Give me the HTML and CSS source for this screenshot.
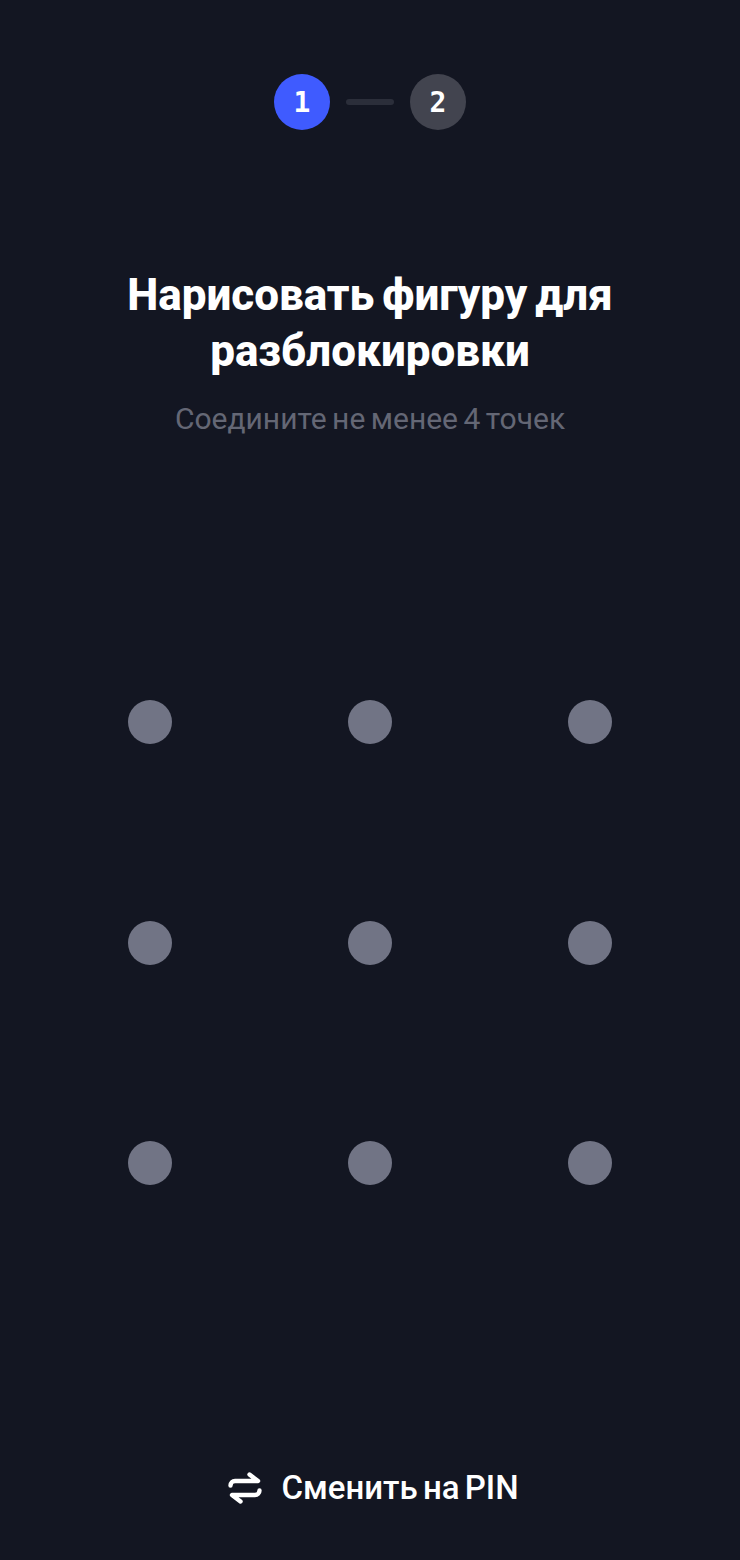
FILE: index.html
```html
<!DOCTYPE html>
<html lang="ru">
<head>
<meta charset="utf-8">
<title>Нарисовать фигуру для разблокировки</title>
<link rel="stylesheet" href="styles.css">
</head>
<body>
<main class="screen">
  <div class="steps">
    <div class="step step-active">1</div>
    <div class="step-line"></div>
    <div class="step step-next">2</div>
  </div>
  <h1 class="title">Нарисовать фигуру для разблокировки</h1>
  <p class="hint">Соедините не менее 4 точек</p>
  <div class="pattern">
    <span class="dot"></span><span class="dot"></span><span class="dot"></span>
    <span class="dot"></span><span class="dot"></span><span class="dot"></span>
    <span class="dot"></span><span class="dot"></span><span class="dot"></span>
  </div>
  <button class="switch" type="button">
    <svg class="switch-icon" width="36" height="36" viewBox="0 0 36 36" fill="none" stroke="#fff" stroke-width="4.4" stroke-linecap="round" stroke-linejoin="round">
      <path d="M22.5 4.5L31 11H8C5.5 11 3.5 13 3.5 15.5"/>
      <path d="M13.5 31.5L5 25H28C30.5 25 32.5 23 32.5 20.5"/>
    </svg>
    <span>Сменить на PIN</span>
  </button>
</main>
</body>
</html>
```
FILE: styles.css
```css
html, body {
  margin: 0;
  padding: 0;
  background: #131622;
}
.screen {
  width: 740px;
  height: 1560px;
  display: flex;
  flex-direction: column;
  align-items: center;
  font-family: Roboto, "Liberation Sans", sans-serif;
  color: #fff;
  box-sizing: border-box;
  padding-top: 74px;
}
.steps {
  display: flex;
  align-items: center;
  gap: 16px;
}
.step {
  width: 56px;
  height: 56px;
  border-radius: 50%;
  display: flex;
  align-items: center;
  justify-content: center;
  font-size: 28px;
  font-weight: 700;
  font-family: "DejaVu Sans Mono", monospace;
}
.step-active { background: #3f5bff; }
.step-next { background: #42444f; }
.step-line {
  width: 48px;
  height: 6px;
  border-radius: 3px;
  background: #2b2e3a;
}
.title {
  margin: 137px 0 0;
  width: 560px;
  font-size: 44px;
  line-height: 56px;
  font-weight: 800;
  word-spacing: -3px;
  text-align: center;
}
.hint {
  margin: 22px 0 0;
  font-size: 30px;
  line-height: 36px;
  font-weight: 400;
  word-spacing: -2px;
  color: #646775;
}
.pattern {
  margin-top: 263px;
  display: grid;
  grid-template-columns: repeat(3, 44px);
  column-gap: 176px;
  row-gap: 176.5px;
}
.dot {
  width: 44px;
  height: 44px;
  border-radius: 50%;
  background: #717485;
}
.switch {
  margin: 283px 0 0 6px;
  display: flex;
  align-items: center;
  gap: 18px;
  padding: 0;
  border: 0;
  background: none;
  color: #fff;
  font-family: inherit;
  font-size: 33px;
  line-height: 40px;
  font-weight: 500;
  word-spacing: -3px;
}
```
